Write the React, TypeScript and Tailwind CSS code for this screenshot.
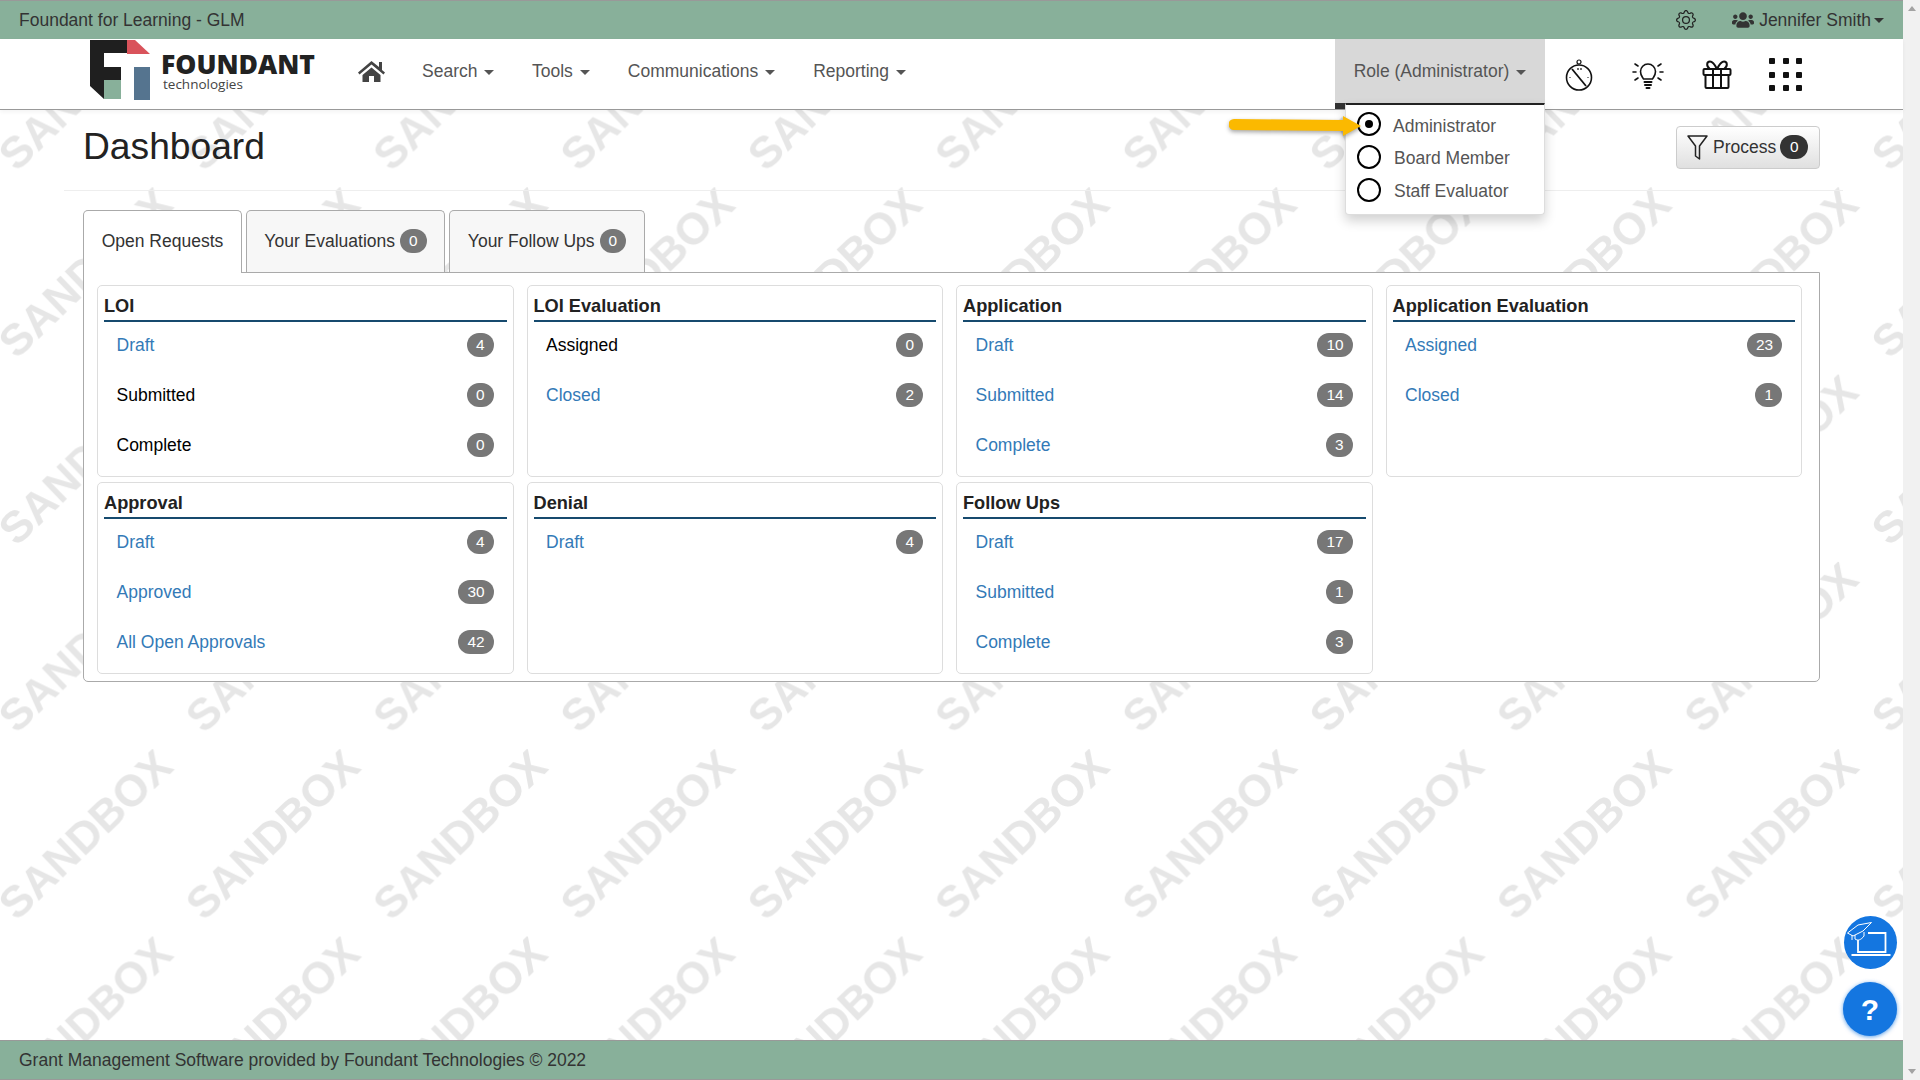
import React from "react";
import { BsGear } from "react-icons/bs";
import { FaUsers } from "react-icons/fa";

type Row = { label: string; count: number; link?: boolean };
type Card = { title: string; rows: Row[] };

const cards: Card[] = [
  {
    title: "LOI",
    rows: [
      { label: "Draft", count: 4, link: true },
      { label: "Submitted", count: 0 },
      { label: "Complete", count: 0 },
    ],
  },
  {
    title: "LOI Evaluation",
    rows: [
      { label: "Assigned", count: 0 },
      { label: "Closed", count: 2, link: true },
    ],
  },
  {
    title: "Application",
    rows: [
      { label: "Draft", count: 10, link: true },
      { label: "Submitted", count: 14, link: true },
      { label: "Complete", count: 3, link: true },
    ],
  },
  {
    title: "Application Evaluation",
    rows: [
      { label: "Assigned", count: 23, link: true },
      { label: "Closed", count: 1, link: true },
    ],
  },
  {
    title: "Approval",
    rows: [
      { label: "Draft", count: 4, link: true },
      { label: "Approved", count: 30, link: true },
      { label: "All Open Approvals", count: 42, link: true },
    ],
  },
  {
    title: "Denial",
    rows: [{ label: "Draft", count: 4, link: true }],
  },
  {
    title: "Follow Ups",
    rows: [
      { label: "Draft", count: 17, link: true },
      { label: "Submitted", count: 1, link: true },
      { label: "Complete", count: 3, link: true },
    ],
  },
];

const Caret = () => <span className="ml-[7px] inline-block border-x-[5px] border-t-[5px] border-x-transparent border-t-[#555] align-middle"></span>;

const Badge = ({ count }: { count: number }) => <span className="flex h-[24px] min-w-[26px] items-center justify-center rounded-full bg-[#777] px-[9px] text-[15.4px] text-white">{count}</span>;

const Logo = () => (
  <div className="ml-[90px] flex w-[268px] items-start">
    <svg width="61" height="60" viewBox="0 0 61 60" className="mt-[1px] shrink-0">
      <polygon points="0,0 37,0 37,13 14,13 14,27 31,27 31,40 14,40 14,59 0,46" fill="#1f1f1f" />
      <rect x="14" y="40" width="17" height="19" fill="#88b09a" />
      <polygon points="37,0 45,0 60,14 37,14" fill="#d9535b" />
      <rect x="44" y="27" width="16" height="33" fill="#55748f" />
    </svg>
    <div className="ml-[10px] mt-[12px] flex flex-col">
      <span className="font-['Open_Sans',sans-serif] text-[26.5px] leading-[26px] font-extrabold text-[#222]">FOUNDANT</span>
      <span className="pl-[2px] font-['Open_Sans',sans-serif] text-[13.5px] leading-[14px] text-[#444]">technologies</span>
    </div>
  </div>
);

const HomeIcon = () => (
  <svg width="27" height="22" viewBox="0 0 27 22" fill="#444">
    <path d="M13.500 1L21 7V2h3v8l3 2.500-1.500 2L13.500 4.500l-12 10L0 12.500z" />
    <path d="M4.500 15l9-7.500 9 7.500v7H16v-6h-5v6H4.500z" />
  </svg>
);

const NavItem = ({ label, className }: { label: string; className: string }) => (
  <span className={"whitespace-nowrap text-[#555] " + className}>
    {label}
    <Caret />
  </span>
);

const Radio = ({ label, selected }: { label: string; selected?: boolean }) => (
  <div className="flex h-[32.7px] items-center">
    <span className="flex h-[24px] w-[24px] items-center justify-center rounded-full border-[2.5px] border-black bg-white">{selected && <span className="h-[8px] w-[8px] rounded-full bg-black"></span>}</span>
    <span className={selected ? "ml-[12px] mt-[3px] text-[#555]" : "ml-[13px] mt-[3px] text-[#555]"}>{label}</span>
  </div>
);

const Stopwatch = () => (
  <svg width="30" height="32" viewBox="0 0 30 32" fill="none" stroke="#111" strokeWidth="1.6">
    <circle cx="15" cy="18.5" r="12.5" />
    <circle cx="15" cy="3" r="2" strokeWidth="1.2" />
    <path d="M8 10l14 17" strokeWidth="1.8" />
    <path d="M14 9v2M17 9v2M5.5 18.5h1M23.5 18.5h1" strokeWidth="1.2" />
  </svg>
);

const Bulb = () => (
  <svg width="32" height="28" viewBox="0 0 32 28" fill="none" stroke="#111" strokeWidth="1.6" strokeLinecap="round">
    <path d="M11.5 18c-1-2-3-3.5-3-7.5a7.5 7.5 0 0 1 15 0c0 4-2 5.500-3 7.500z" />
    <path d="M12.500 21h7M13 24h6M14.500 27h3" strokeWidth="2" />
    <path d="M3 3l3 2M1 11h3M3 19l3-2M29 3l-3 2M31 11h-3M29 19l-3-2" />
  </svg>
);

const GiftIcon = () => (
  <svg width="30" height="29" viewBox="0 0 30 29" fill="none" stroke="#111" strokeWidth="2" strokeLinejoin="round">
    <rect x="1.500" y="9" width="27" height="6" rx="1" />
    <path d="M3.500 15v12a1 1 0 0 0 1 1h21a1 1 0 0 0 1-1V15M11 9v19M19 9v19" />
    <path d="M15 9c-2-4-4-7.500-7-7.500-3.500 0-4 5 0 7.500M15 9c2-4 4-7.500 7-7.500 3.500 0 4 5 0 7.500" />
  </svg>
);

const AppGrid = () => (
  <div className="grid w-[33px] grid-cols-3 gap-x-[8px] gap-y-[7.500px]">
    {Array.from({ length: 9 }).map((_, i) => (
      <span key={i} className="h-[6px] w-[6px] rounded-[1px] bg-[#111]"></span>
    ))}
  </div>
);

const Watermark = () => (
  <svg className="absolute inset-0 h-full w-full" aria-hidden="true">
    <defs>
      <pattern id="wm" x="-2" y="-110" width="187.3" height="187.3" patternUnits="userSpaceOnUse">
        <text x="87" y="85" transform="rotate(-44 87 85)" dy="15.7" textAnchor="middle" fontFamily="'Liberation Sans', sans-serif" fontWeight="700" fontSize="44" fill="#e6e6e6">SANDBOX</text>
      </pattern>
    </defs>
    <rect width="100%" height="100%" fill="url(#wm)" />
  </svg>
);

const StatusCard = ({ card }: { card: Card }) => (
  <div className="h-full rounded-[5px] border border-[#ddd] bg-white px-[6px]">
    <h4 className="flex h-[36px] items-end border-b-2 border-[#164a6e] pb-[1px] text-[18.2px] leading-[26px] font-bold text-[#222]">{card.title}</h4>
    <div className="-mt-[2px] pb-[6px]">
      {card.rows.map((row) => (
        <div key={row.label} className="flex h-[50px] items-center justify-between pl-[12.5px] pr-[13px]">
          <span className={row.link ? "text-[#337ab7]" : "text-black"}>{row.label}</span>
          <Badge count={row.count} />
        </div>
      ))}
    </div>
  </div>
);

const App = () => {
  return (
    <div className="flex h-screen w-full overflow-hidden bg-white font-['Liberation_Sans',sans-serif] text-[17.5px] text-[#333]">
      <div className="relative flex h-full w-[1903px] flex-col">
        <header className="flex h-[39px] shrink-0 items-center border-t border-[#999] bg-[#88b09a] pl-[19px] pr-[19px]">
          <span>Foundant for Learning - GLM</span>
          <BsGear className="ml-auto text-[20px] text-[#222]" />
          <FaUsers className="ml-[36px] text-[22px] text-[#333]" />
          <span className="ml-[5px]">Jennifer Smith</span>
          <span className="ml-[3px] inline-block border-x-[5px] border-t-[5px] border-x-transparent border-t-[#333]"></span>
        </header>

        <nav className="relative z-20 flex h-[71px] shrink-0 border-b border-[#999] bg-white shadow-[0_2px_4px_rgba(0,0,0,0.05)]">
          <Logo />
          <div className="flex h-[70px] items-center pb-[6px]">
            <HomeIcon />
            <NavItem label="Search" className="ml-[37px]" />
            <NavItem label="Tools" className="ml-[37.5px]" />
            <NavItem label="Communications" className="ml-[38px]" />
            <NavItem label="Reporting" className="ml-[38px]" />
          </div>
          <div className="relative ml-auto flex h-[70px] w-[210px] items-start justify-center border-b-[6px] border-[#333] bg-[#d8d8d8] pt-[19px]">
            <span className="whitespace-nowrap text-[#555]">
              Role (Administrator)
              <Caret />
            </span>
            <div className="absolute left-[10px] top-[64px] z-30 h-[112px] w-[200px] rounded-b-[4px] border border-t-2 border-[#ddd] border-t-[#222] bg-white pl-[11px] pt-[3px] shadow-[0_6px_12px_rgba(0,0,0,0.18)]">
              <Radio label="Administrator" selected />
              <Radio label="Board Member" />
              <Radio label="Staff Evaluator" />
            </div>
            <svg className="absolute left-[-106px] top-[73px] z-40 drop-shadow-[0_2px_2px_rgba(0,0,0,0.35)]" width="134" height="28" viewBox="0 0 134 28">
              <path d="M5 7l109 1V4l18 10-18 10v-5L5 18a5.500 5.500 0 0 1 0-11z" fill="#fbb900" />
            </svg>
          </div>
          <div className="flex h-[70px] items-center pl-[19px] pt-[1px]">
            <Stopwatch />
            <span className="ml-[38px]">
              <Bulb />
            </span>
            <span className="ml-[38px]">
              <GiftIcon />
            </span>
            <span className="ml-[37px]">
              <AppGrid />
            </span>
          </div>
          <div className="w-[101px]"></div>
        </nav>

        <main className="relative min-h-0 flex-1 overflow-hidden">
          <Watermark />
          <div className="relative ml-[64px] w-[1779px]">
            <div className="flex h-[81px] items-center justify-between border-b border-[#eee] pb-[6px] pl-[19px] pr-[23px]">
              <h1 className="text-[37.2px] font-normal leading-none text-[#222]">Dashboard</h1>
              <button className="flex h-[43px] w-[144px] items-center rounded-[4px] border border-[#ccc] bg-gradient-to-b from-white to-[#e0e0e0] pl-[10px] text-[#333]">
                <svg width="21" height="27" viewBox="0 0 21 27" fill="none" stroke="#222" strokeWidth="1.5" strokeLinejoin="round">
                  <path d="M1 2h19l-7.500 10v13l-4-3V12z" />
                </svg>
                <span className="ml-[5px]">Process</span>
                <span className="ml-[4px] flex h-[24px] w-[28px] items-center justify-center rounded-full bg-[#333] text-[15.4px] text-white">0</span>
              </button>
            </div>

            <div className="mr-[23px] ml-[19px] pt-[19px]">
              <div className="relative z-10 flex h-[63px] gap-[4px]">
                <div className="flex h-[63px] w-[159px] items-center justify-center rounded-t-[5px] border border-b-0 border-[#aaa] bg-white pb-[2px]">Open Requests</div>
                <div className="flex h-[62px] w-[199px] items-center justify-center rounded-t-[5px] border border-b-0 border-[#aaa] bg-[#f7f7f7] pb-[1px]">
                  Your Evaluations
                  <span className="ml-[5px]">
                    <Badge count={0} />
                  </span>
                </div>
                <div className="flex h-[62px] w-[196px] items-center justify-center rounded-t-[5px] border border-b-0 border-[#aaa] bg-[#f7f7f7] pb-[1px]">
                  Your Follow Ups
                  <span className="ml-[5px]">
                    <Badge count={0} />
                  </span>
                </div>
              </div>
              <div className="-mt-px rounded-b-[5px] border border-[#aaa] bg-white pb-[7px] pl-[13px] pr-[17px] pt-[12px]">
                <div className="grid grid-cols-4 gap-x-[13px] gap-y-[5px]">
                  {cards.map((card) => (
                    <StatusCard key={card.title} card={card} />
                  ))}
                </div>
              </div>
            </div>
          </div>

          <button className="absolute bottom-[71px] right-[6px] h-[53px] w-[53px] rounded-full bg-[#1476e0]">
            <svg width="53" height="53" viewBox="0 0 53 53" fill="none" stroke="white">
              <path d="M14 24v12h27.500V17H24" strokeWidth="1.800" />
              <path d="M7.500 39h39" strokeWidth="1.800" />
              <path d="M3.500 17L14 9l13.500-2.500L19 15l-10 5z" strokeWidth="1" />
              <path d="M8 19v5M11 19v4c3 2 6 1 9-3v-4" strokeWidth="1" />
            </svg>
          </button>
          <button className="absolute bottom-[4px] right-[6px] flex h-[54px] w-[54px] items-center justify-center rounded-full bg-[#1476e0] text-[30px] font-bold text-white shadow-[0_1px_4px_rgba(20,118,224,0.7)]">?</button>
        </main>

        <footer className="flex h-[40px] shrink-0 items-center border-y border-[#999] bg-[#88b09a] pl-[19px]">Grant Management Software provided by Foundant Technologies © 2022</footer>
      </div>

      <div className="flex h-full w-[17px] shrink-0 flex-col items-center justify-between bg-[#f1f1f1] py-[6px]">
        <span className="border-x-[4px] border-b-[5px] border-x-transparent border-b-[#a3a3a3]"></span>
        <span className="border-x-[4px] border-t-[5px] border-x-transparent border-t-[#a3a3a3]"></span>
      </div>
    </div>
  );
};

export default App;
